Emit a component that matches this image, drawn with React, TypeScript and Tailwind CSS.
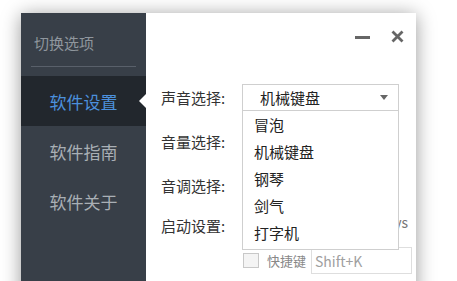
import React from 'react';

const FONT = '"Microsoft YaHei", "Noto Sans CJK SC", "Noto Sans", sans-serif';

const menu = [
  { label: '软件设置', active: true },
  { label: '软件指南', active: false },
  { label: '软件关于', active: false },
];

const options = ['冒泡', '机械键盘', '钢琴', '剑气', '打字机'];

const Row: React.FC<{ label: string; children?: React.ReactNode; h?: string }> = ({ label, children, h = 'h-[44px]' }) => (
  <div className={`flex items-center ${h}`}>
    <div className="w-[81px] shrink-0 text-[15px] leading-none text-[#333]">{label}</div>
    <div className="flex-1 relative">{children}</div>
  </div>
);

const App: React.FC = () => {
  return (
    <div className="w-[457px] h-[281px] overflow-hidden bg-white" style={{ fontFamily: FONT }}>
      <div className="ml-[21px] mt-[13px] w-[395px] h-[290px] flex bg-white shadow-[0_2px_18px_rgba(0,0,0,0.4)]">
        {/* sidebar */}
        <div className="w-[125px] shrink-0 bg-[#383f48] flex flex-col">
          <div className="h-[53px] pl-[13px] pt-[22px] text-[15px] leading-none text-[#8f969d]">切换选项</div>
          <div className="mx-[10px] h-px bg-[#59606a]" />
          <div className="h-[9px]" />
          {menu.map((m) => (
            <div
              key={m.label}
              className={`relative h-[50px] flex items-center justify-center text-[17px] leading-none ${m.active ? 'bg-[#22272d] text-[#4c90dc]' : 'text-[#a9afb5]'}`}
            >
              {m.label}
              {m.active && (
                <span className="absolute right-0 top-1/2 -translate-y-1/2 w-0 h-0 border-y-[7px] border-y-transparent border-r-[7px] border-r-white" />
              )}
            </div>
          ))}
        </div>

        {/* content */}
        <div className="flex-1 flex flex-col px-[15px]">
          <div className="h-[62px] flex items-start justify-end gap-[21px] pt-[17px] pr-[8px]">
            <svg width="15" height="12" viewBox="0 0 15 12" className="mt-[1px]">
              <rect x="0" y="5" width="15" height="3" fill="#666" />
            </svg>
            <svg width="13" height="13" viewBox="0 0 13 13">
              <path d="M1.5 1.5 L11.5 11.5 M11.5 1.5 L1.5 11.5" stroke="#666" strokeWidth="2.8" />
            </svg>
          </div>

          <Row label="声音选择:">
            <div className="w-[157px] h-[27px] border border-[#cfcfcf] bg-white flex items-center pl-[17px] pr-[10px] text-[15px] leading-none text-[#222]">
              <span className="flex-1">机械键盘</span>
              <span className="w-0 h-0 border-x-[4px] border-x-transparent border-t-[5px] border-t-[#666]" />
            </div>
            <ul className="absolute left-0 top-[26px] z-10 w-[157px] border border-[#cfcfcf] bg-white pb-[3px]">
              {options.map((o) => (
                <li key={o} className="h-[27px] flex items-center pl-[11px] text-[15px] leading-none text-[#222]">
                  {o}
                </li>
              ))}
            </ul>
          </Row>
          <Row label="音量选择:" />
          <Row label="音调选择:" />
          <Row label="启动设置:" h="h-[36px]">
            <div className="w-[166px] flex justify-end text-[14px] leading-none text-[#777] -translate-y-[3px]">Always</div>
          </Row>

          <div className="mt-[4px] flex items-center pl-[82px] whitespace-nowrap">
            <span className="shrink-0 w-[16px] h-[15px] border border-[#c8c8c8] bg-[#f4f4f4]" />
            <span className="shrink-0 ml-[8px] text-[13px] leading-none text-[#888]">快捷键</span>
            <div className="shrink-0 ml-[5px] w-[101px] h-[27px] border border-[#dedede] flex items-center pl-[3px] text-[14px] leading-none text-[#a0a0a0]">
              Shift+K
            </div>
          </div>
        </div>
      </div>
    </div>
  );
};

export default App;
